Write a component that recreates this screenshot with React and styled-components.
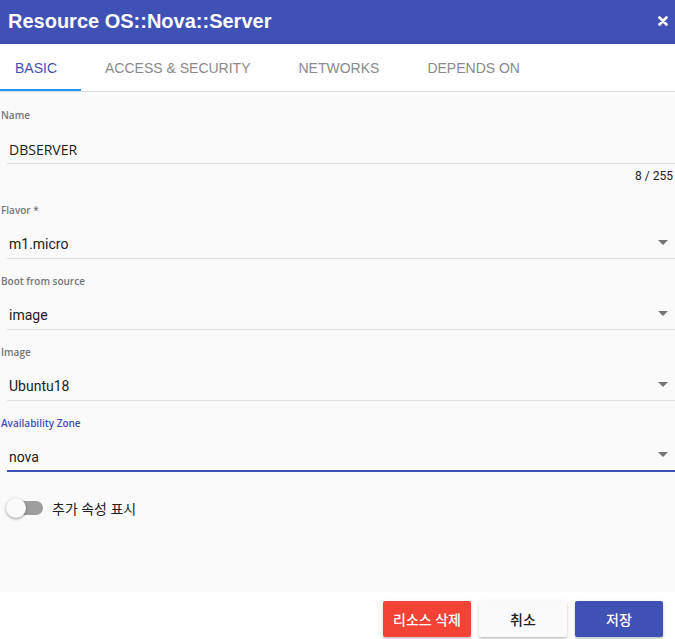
import React from "react";
import styled, { createGlobalStyle } from "styled-components";

const GlobalStyle = createGlobalStyle`
  html, body {
    margin: 0;
    padding: 0;
    background: #fafafa;
  }
  body {
    font-family: Roboto, "Noto Sans CJK KR", sans-serif;
    width: 675px;
    height: 639px;
    overflow: hidden;
  }
`;

const Dialog = styled.div`
  display: flex;
  flex-direction: column;
  width: 675px;
  height: 639px;
  background: #fafafa;
`;

const Header = styled.div`
  display: flex;
  align-items: center;
  justify-content: space-between;
  height: 44px;
  padding: 0 7px 0 8px;
  background: #3f51b5;
  color: #fff;
  box-sizing: border-box;
`;

const Title = styled.h2`
  margin: 0;
  font-family: "Liberation Sans", Arial, sans-serif;
  font-size: 20px;
  font-weight: 700;
  line-height: 1;
  margin-top: -3px;
`;

const Close = styled.button`
  border: 0;
  background: none;
  padding: 0;
  width: 10px;
  height: 10px;
  display: flex;
  margin-top: -3px;
  cursor: pointer;
`;

const TabBar = styled.div`
  display: flex;
  height: 48px;
  background: #fff;
  border-bottom: 1px solid #e0e0e0;
  box-sizing: border-box;
`;

const Tab = styled.div`
  position: relative;
  display: flex;
  align-items: center;
  padding: 0 24px;
  font-family: "Liberation Sans", Arial, sans-serif;
  font-size: 14px;
  text-transform: uppercase;
  color: ${(p) => (p.active ? "#3f51b5" : "#8a8a8a")};
  &:first-child {
    padding-left: 15px;
  }
  &::after {
    content: "";
    display: ${(p) => (p.active ? "block" : "none")};
    position: absolute;
    left: 0;
    right: 0;
    bottom: 0;
    height: 2px;
    background: #2196f3;
  }
`;

const Body = styled.div`
  flex: 1;
  padding: 17px 0 0 1px;
`;

const Field = styled.div`
  margin-bottom: ${(p) => (p.tight ? "22px" : "16px")};
`;

const Label = styled.div`
  font-family: "Open Sans", sans-serif;
  font-size: 10px;
  font-weight: 600;
  line-height: 12px;
  color: ${(p) => (p.focused ? "#3f51b5" : "#757575")};
`;

const InputRow = styled.div`
  display: flex;
  align-items: center;
  justify-content: space-between;
  height: 31px;
  margin: 12px 0 0 6px;
  padding: 2px 7px 0 2px;
  border-bottom: ${(p) => (p.focused ? "2px solid #3f51b5" : "1px solid #e0e0e0")};
  box-sizing: border-box;
  font-size: 14px;
  color: #212121;
`;

const Value = styled.span`
  font-family: ${(p) => (p.plain ? "'Open Sans', sans-serif" : "Roboto, sans-serif")};
`;

const Counter = styled.div`
  text-align: right;
  padding-right: 2px;
  font-size: 12px;
  line-height: 12px;
  margin-top: 6px;
  color: #212121;
`;

const Arrow = styled.span`
  width: 0;
  height: 0;
  border-left: 5px solid transparent;
  border-right: 5px solid transparent;
  border-top: 5px solid #757575;
  margin-top: -4px;
`;

const ToggleRow = styled.label`
  display: flex;
  align-items: center;
  gap: 9px;
  margin: 26px 0 0 6px;
  font-size: 14px;
  color: #212121;
`;

const Track = styled.span`
  position: relative;
  width: 34px;
  height: 14px;
  margin-left: 2px;
  border-radius: 7px;
  background: #9e9e9e;
`;

const Thumb = styled.span`
  position: absolute;
  left: -3px;
  top: -3px;
  width: 20px;
  height: 20px;
  border-radius: 50%;
  background: #fafafa;
  box-shadow: 0 1px 3px rgba(0, 0, 0, 0.4);
`;

const Footer = styled.div`
  display: flex;
  justify-content: flex-end;
  gap: 8px;
  height: 47px;
  padding: 9px 12px 0 0;
  background: #fff;
  box-sizing: border-box;
`;

const Button = styled.button`
  width: 88px;
  height: 36px;
  border: 0;
  border-radius: 2px;
  font-family: Roboto, "Noto Sans CJK KR", sans-serif;
  font-size: 14px;
  font-weight: 500;
  color: ${(p) => (p.variant === "plain" ? "#212121" : "#fff")};
  background: ${(p) =>
    p.variant === "danger" ? "#f44336" : p.variant === "primary" ? "#3f51b5" : "#fafafa"};
  box-shadow: 0 2px 2px rgba(0, 0, 0, 0.14), 0 1px 4px rgba(0, 0, 0, 0.12);
`;

const fields = [
  { label: "Flavor *", value: "m1.micro" },
  { label: "Boot from source", value: "image" },
  { label: "Image", value: "Ubuntu18" },
];

export default function App() {
  return (
    <Dialog>
      <GlobalStyle />
      <Header>
        <Title>Resource OS::Nova::Server</Title>
        <Close aria-label="close">
          <svg width="10" height="10" viewBox="0 0 10 10">
            <path d="M1.5 1.5 L8.5 8.5 M8.5 1.5 L1.5 8.5" stroke="#fff" strokeWidth="2.6" strokeLinecap="round" />
          </svg>
        </Close>
      </Header>
      <TabBar>
        <Tab active>Basic</Tab>
        <Tab>Access &amp; Security</Tab>
        <Tab>Networks</Tab>
        <Tab>Depends On</Tab>
      </TabBar>
      <Body>
        <Field tight>
          <Label>Name</Label>
          <InputRow>
            <Value plain>DBSERVER</Value>
          </InputRow>
          <Counter>8 / 255</Counter>
        </Field>
        {fields.map((f) => (
          <Field key={f.label}>
            <Label>{f.label}</Label>
            <InputRow>
              <Value>{f.value}</Value>
              <Arrow />
            </InputRow>
          </Field>
        ))}
        <Field>
          <Label focused>Availability Zone</Label>
          <InputRow focused>
            <Value>nova</Value>
            <Arrow />
          </InputRow>
        </Field>
        <ToggleRow>
          <Track>
            <Thumb />
          </Track>
          추가 속성 표시
        </ToggleRow>
      </Body>
      <Footer>
        <Button variant="danger">리소스 삭제</Button>
        <Button variant="plain">취소</Button>
        <Button variant="primary">저장</Button>
      </Footer>
    </Dialog>
  );
}
